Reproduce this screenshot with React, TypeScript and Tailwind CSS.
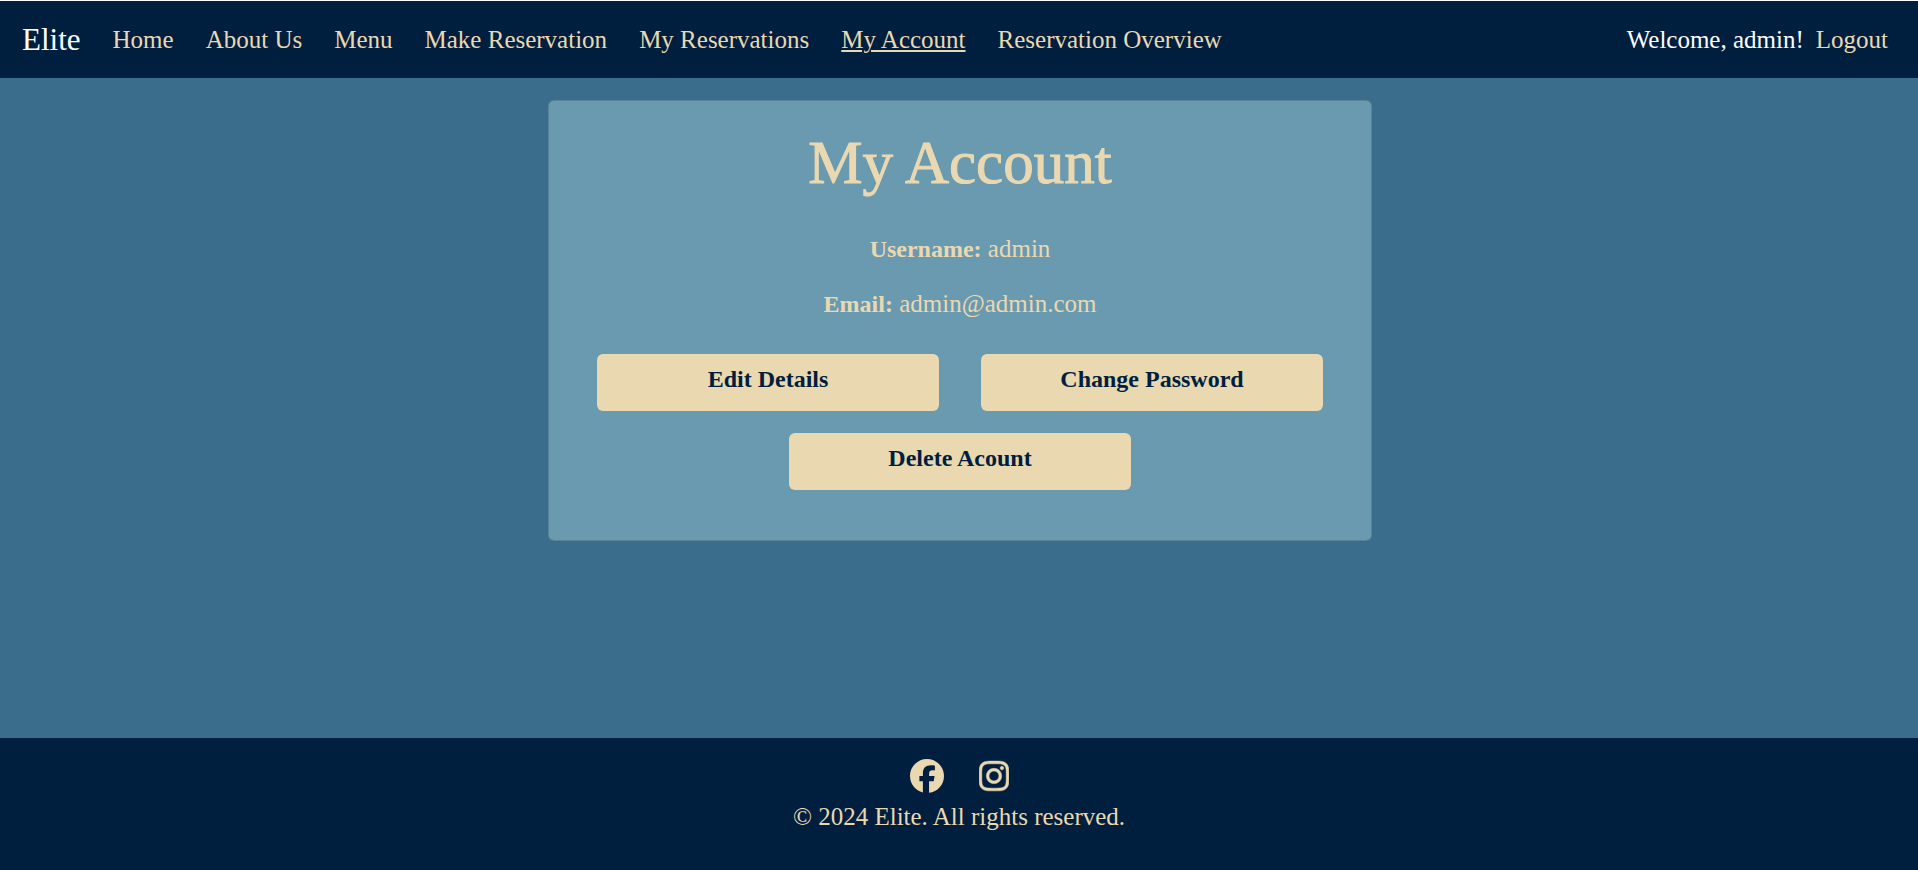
import { FaInstagram } from "react-icons/fa6";

const navLinks = [
  { label: "Home" },
  { label: "About Us" },
  { label: "Menu" },
  { label: "Make Reservation" },
  { label: "My Reservations" },
  { label: "My Account", active: true },
  { label: "Reservation Overview" },
];

function Navbar() {
  return (
    <header className="flex flex-wrap items-center justify-between border-t border-white bg-[#001f3f] pt-5 pb-[19px] pr-[30px] pl-[22px]">
      <nav className="flex flex-wrap items-center gap-x-8">
        <a href="#" className="text-[31px] leading-[38px] text-white">
          Elite
        </a>
        {navLinks.map((link) => (
          <a
            key={link.label}
            href="#"
            aria-current={link.active ? "page" : undefined}
            className={link.active ? "underline decoration-2 underline-offset-2" : ""}
          >
            {link.label}
          </a>
        ))}
      </nav>
      <div className="flex items-center gap-3">
        <span className="text-white">Welcome, admin!</span>
        <a href="#">Logout</a>
      </div>
    </header>
  );
}

function ActionButton({ label }: { label: string }) {
  return (
    <button
      type="button"
      className="w-[342px] rounded-md bg-[#ead8b1] pt-2 pb-[15px] text-[24px] leading-[34px] font-bold text-[#001f3f]"
    >
      {label}
    </button>
  );
}

function AccountCard() {
  return (
    <section className="w-full max-w-[824px] rounded-md border border-black/15 bg-[#6a9ab0] px-6 pt-7 pb-[50px] text-center">
      <h1 className="text-[61px] leading-[68px] [-webkit-text-stroke:1px_#ead8b1]">My Account</h1>
      <p className="mt-[35px] leading-[34px]">
        <strong className="text-[24px]">Username:</strong> admin
      </p>
      <p className="mt-[21px] leading-[34px]">
        <strong className="text-[24px]">Email:</strong> admin@admin.com
      </p>
      <div className="mt-[33px] flex flex-wrap justify-center gap-x-[42px] gap-y-[22px]">
        <ActionButton label="Edit Details" />
        <ActionButton label="Change Password" />
        <ActionButton label="Delete Acount" />
      </div>
    </section>
  );
}

function FacebookIcon() {
  return (
    <svg viewBox="0 0 512 512" fill="currentColor" aria-hidden="true" className="size-[34px]">
      <path d="M512 256C512 114.6 397.4 0 256 0S0 114.6 0 256C0 376 82.7 476.8 194.2 504.5V334.2H141.4V256h52.8V222.3c0-87.1 39.4-127.5 125-127.5 16.2 0 44.2 3.2 55.7 6.4V172c-6-.6-16.5-1-29.6-1-42 0-58.2 15.9-58.2 57.2V256h83.6l-14.4 78.2H287V510.1C413.8 494.8 512 386.9 512 256z" />
    </svg>
  );
}

function Footer() {
  return (
    <footer className="bg-[#001f3f] pt-[21px] pb-9 text-center">
      <div className="flex justify-center gap-[35px]">
        <a href="#" aria-label="Facebook">
          <FacebookIcon />
        </a>
        <a href="#" aria-label="Instagram">
          <FaInstagram className="h-[34px] w-[30px] stroke-current stroke-[8px]" />
        </a>
      </div>
      <p className="mt-[7px] leading-[34px]">© 2024 Elite. All rights reserved.</p>
    </footer>
  );
}

export default function App() {
  return (
    <div className="flex min-h-screen flex-col bg-[#3a6d8c] font-['Liberation_Serif',serif] text-[25px] leading-[34px] text-[#ead8b1]">
      <Navbar />
      <main className="flex grow items-start justify-center py-[22px] pr-4 pl-[18px]">
        <AccountCard />
      </main>
      <Footer />
    </div>
  );
}
